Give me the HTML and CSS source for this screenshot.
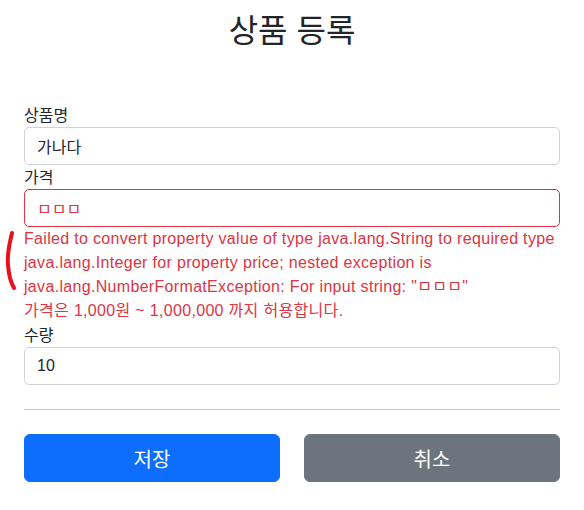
FILE: index.html
```html
<!DOCTYPE html>
<html lang="ko">
<head>
<meta charset="utf-8">
<title>상품 등록</title>
<link rel="stylesheet" href="styles.css">
</head>
<body>
<div class="container">
  <div class="header">
    <h2 class="title">상품 등록</h2>
  </div>
  <form class="form">
    <div class="field">
      <label class="label">상품명</label>
      <input class="input" type="text" value="가나다">
    </div>
    <div class="field">
      <label class="label">가격</label>
      <input class="input field-error" type="text" value="ㅁㅁㅁ">
      <div class="error-text">Failed to convert property value of type java.lang.String to required type java.lang.Integer for property price; nested exception is java.lang.NumberFormatException: For input string: "ㅁㅁㅁ"</div>
      <div class="error-text">가격은 1,000원 ~ 1,000,000 까지 허용합니다.</div>
    </div>
    <div class="field">
      <label class="label">수량</label>
      <input class="input" type="text" value="10">
    </div>
    <hr class="divider">
    <div class="actions">
      <button type="button" class="btn btn-primary">저장</button>
      <button type="button" class="btn btn-secondary">취소</button>
    </div>
  </form>
  <svg class="mark" width="24" height="70" viewBox="0 0 24 70" aria-hidden="true">
    <path d="M12 5 C 9 17, 7 27, 8 37 C 9 49, 11 55, 14 60" fill="none" stroke="#e8111a" stroke-width="4" stroke-linecap="round"/>
  </svg>
</div>
</body>
</html>
```
FILE: styles.css
```css
* { box-sizing: border-box; }
html, body { margin: 0; padding: 0; background: #fff; }
body {
  font-family: "Liberation Sans", "Noto Sans CJK KR", sans-serif;
  font-size: 16px;
  line-height: 1.5;
  color: #212529;
}
.container {
  position: relative;
  max-width: 560px;
  margin: 0 auto;
  padding: 9px 12px 0;
}
.title {
  margin: 0;
  font-size: 32px;
  font-weight: 400;
  line-height: 1.2;
  text-align: center;
  font-family: "Noto Sans CJK KR", sans-serif;
}
.form { margin-top: 56px; }
.field { display: flex; flex-direction: column; }
.label {
  display: block;
  height: 24px;
  line-height: 22px;
  font-family: "Noto Sans CJK KR", sans-serif;
}
.input {
  display: block;
  width: 100%;
  height: 38px;
  padding: 6px 12px;
  font: inherit;
  font-family: "Liberation Sans", "Noto Sans CJK KR", sans-serif;
  color: #212529;
  background: #fff;
  border: 1px solid #ced4da;
  border-radius: 5px;
  outline: none;
}
.field-error { border-color: #dc3545; color: #dc3545; }
.error-text { color: #dc3545; line-height: 24px; letter-spacing: 0.32px; }
.divider {
  margin: 24px 0;
  border: 0;
  border-top: 1px solid #c8c9ca;
  height: 0;
}
.actions { display: grid; grid-template-columns: 1fr 1fr; gap: 24px; }
.btn {
  height: 48px;
  font-size: 20px;
  font-family: "Noto Sans CJK KR", sans-serif;
  color: #fff;
  border: 1px solid transparent;
  border-radius: 6px;
  padding: 0 16px;
  cursor: pointer;
}
.btn-primary { background: #0d6efd; border-color: #0d6efd; }
.btn-secondary { background: #6c757d; border-color: #6c757d; }
.mark { position: absolute; left: -12px; top: 228px; }
```
